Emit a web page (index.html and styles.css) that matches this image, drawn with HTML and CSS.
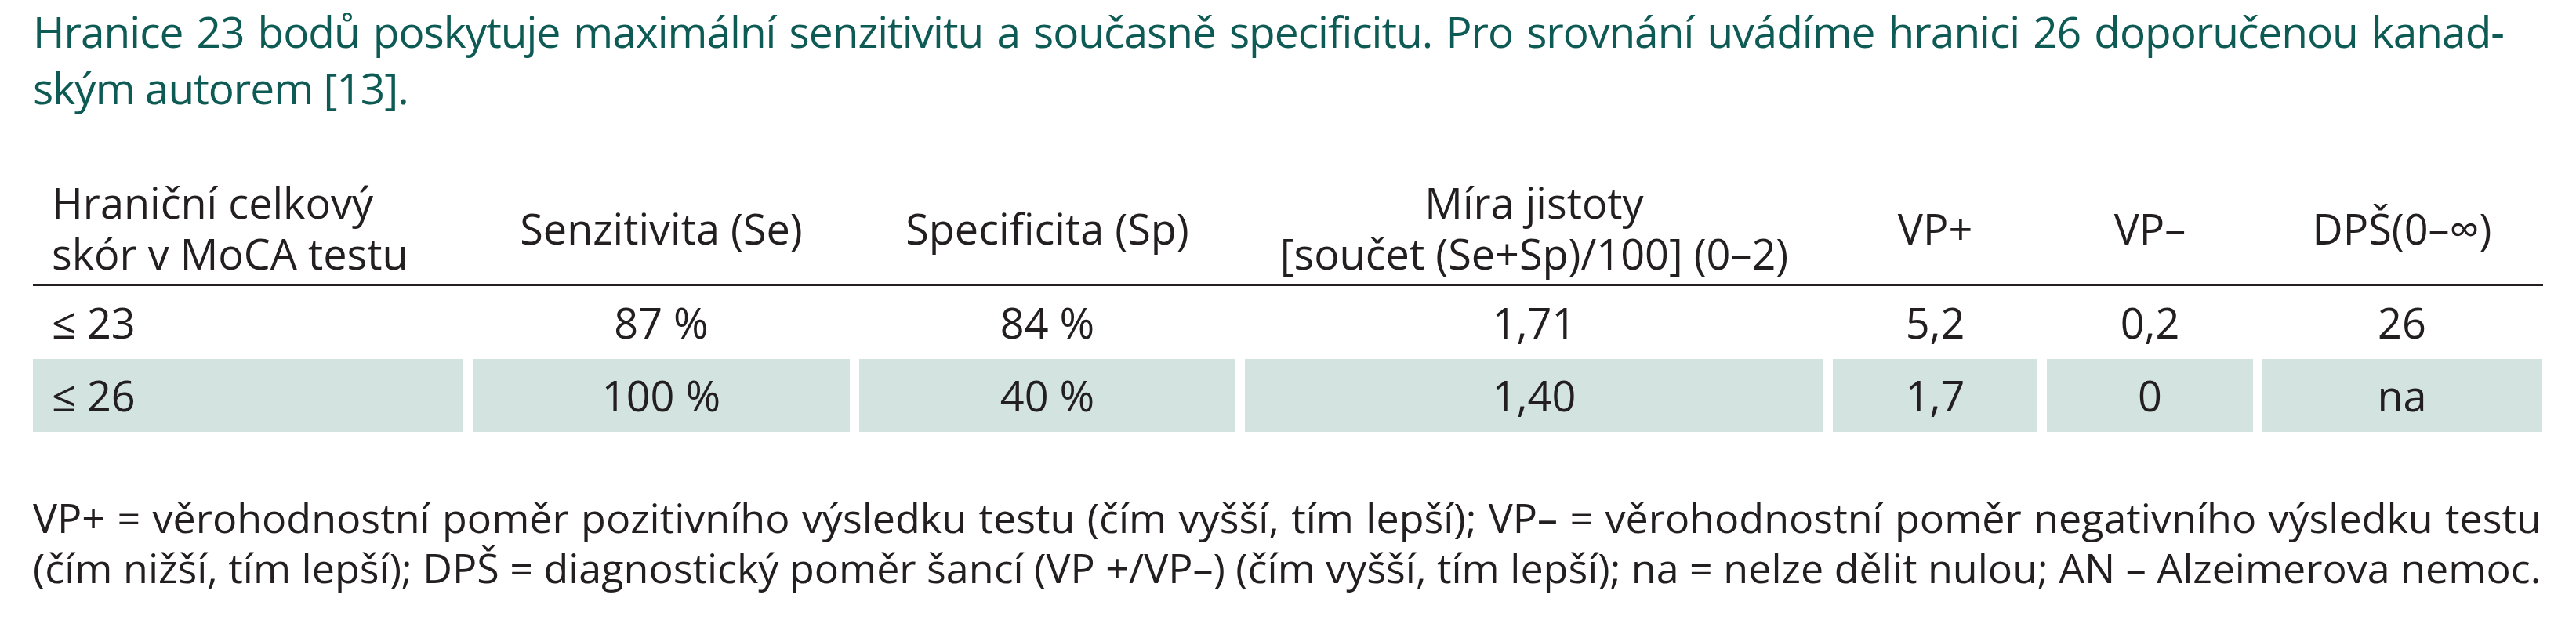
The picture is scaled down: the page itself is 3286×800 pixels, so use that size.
FILE: index.html
```html
<!DOCTYPE html>
<html lang="cs">
<head>
<meta charset="utf-8">
<title>MoCA – hraniční skóre</title>
<link rel="stylesheet" href="styles.css">
</head>
<body>
<div class="page">
  <p class="intro">
    <span class="line justified nowrap">Hranice 23 bodů poskytuje maximální senzitivitu a současně specificitu. Pro srovnání uvádíme hranici 26 doporučenou kanad-</span>
    <span class="line">ským autorem [13].</span>
  </p>

  <div class="tbl">
    <div class="row head">
      <div class="cell first">Hraniční celkový<br>skór v MoCA testu</div>
      <div class="cell">Senzitivita (Se)</div>
      <div class="cell">Specificita (Sp)</div>
      <div class="cell">Míra jistoty<br>[součet (Se+Sp)/100] (0–2)</div>
      <div class="cell">VP+</div>
      <div class="cell">VP–</div>
      <div class="cell">DPŠ(0–∞)</div>
    </div>
    <div class="row body">
      <div class="cell first">≤ 23</div>
      <div class="cell">87 %</div>
      <div class="cell">84 %</div>
      <div class="cell">1,71</div>
      <div class="cell">5,2</div>
      <div class="cell">0,2</div>
      <div class="cell">26</div>
    </div>
    <div class="row body shaded">
      <div class="cell first">≤ 26</div>
      <div class="cell">100 %</div>
      <div class="cell">40 %</div>
      <div class="cell">1,40</div>
      <div class="cell">1,7</div>
      <div class="cell">0</div>
      <div class="cell">na</div>
    </div>
  </div>

  <p class="note">
    <span class="line justified">VP+ = věrohodnostní poměr pozitivního výsledku testu (čím vyšší, tím lepší); VP– = věrohodnostní poměr negativního výsledku testu</span>
    <span class="line">(čím nižší, tím lepší); DPŠ = diagnostický poměr šancí (VP +/VP–) (čím vyšší, tím lepší); na = nelze dělit nulou; AN – Alzeimerova nemoc.</span>
  </p>
</div>
</body>
</html>
```

FILE: styles.css
```css
html, body {
  margin: 0;
  padding: 0;
  background: #ffffff;
}

.page {
  padding: 4px 42px 0 42px;
  width: 3202px;
  font-family: "Open Sans", "Noto Sans", sans-serif;
  color: #231f20;
}

.line {
  display: block;
}

.justified {
  text-align: justify;
  text-align-last: justify;
}

.nowrap {
  white-space: nowrap;
}

.intro {
  margin: 0;
  width: 3152px;
  font-size: 55px;
  letter-spacing: -1px;
  line-height: 72px;
  color: #0e5a54;
}

.tbl {
  margin-top: 78px;
}

.row {
  display: grid;
  grid-template-columns: 549px 481px 480px 738px 261px 263px 356px;
  column-gap: 12px;
  font-size: 54px;
}

.row.head {
  line-height: 65px;
  align-items: center;
  padding-bottom: 6px;
  border-bottom: 3px solid #231f20;
}

.row.body {
  height: 93px;
  align-items: center;
  line-height: 93px;
}

.cell {
  text-align: center;
  white-space: nowrap;
}

.cell.first {
  text-align: left;
  padding-left: 24px;
}

.row.shaded .cell {
  background: #d3e3df;
}

.note {
  margin: 77px 0 0 0;
  width: 3200px;
  font-size: 52px;
  line-height: 64px;
  color: #231f20;
}
```
